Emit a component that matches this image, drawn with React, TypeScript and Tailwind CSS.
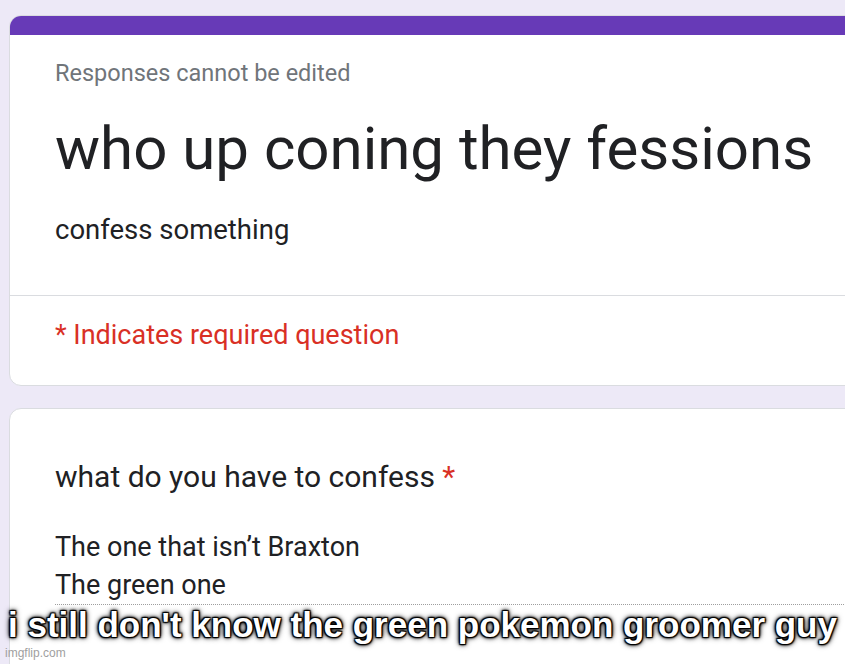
export default function App() {
  return (
    <div className="relative h-[664px] w-[845px] overflow-hidden bg-[#ede9f7] font-['Roboto',sans-serif]">
      <div className="ml-[9px] w-[900px] pt-[15px]">
        {/* header card */}
        <div className="overflow-hidden rounded-[12px] border border-[#dadce0] bg-white">
          <div className="h-[19px] bg-[#673ab7]" />
          <div className="px-[45px] pb-[47px] pt-[23px]">
            <div className="text-[23.5px] leading-[30px] text-[#70757a]">Responses cannot be edited</div>
            <div className="mt-[25px] text-[60px] leading-[72px] text-[#202124]">who up coning they fessions</div>
            <div className="mt-[27px] text-[27.5px] leading-[36px] text-[#202124]">confess something</div>
          </div>
          <div className="border-t border-[#dadce0] px-[45px] pb-[32px] pt-[21px]">
            <div className="text-[27px] leading-[36px] text-[#d93025]">* Indicates required question</div>
          </div>
        </div>

        {/* question card */}
        <div className="mt-[22px] h-[320px] rounded-[12px] border border-[#dadce0] bg-white pl-[45px] pt-[48px]">
          <div className="text-[30px] leading-[40px] text-[#202124]">
            what do you have to confess <span className="text-[#d93025]">*</span>
          </div>
          <div className="mt-[31px] text-[27px] leading-[38px] text-[#202124]">
            <div>The one that isn&rsquo;t Braxton</div>
            <div>The green one</div>
          </div>
          <div className="border-t border-dotted border-[#9e9e9e]" />
        </div>
      </div>

      {/* meme caption */}
      <div className="absolute left-0 right-0 top-[603px] text-center font-['Liberation_Sans',Arial,sans-serif] text-[35px] font-bold leading-[44px] text-white [text-shadow:1px_1px_1px_#000,-1px_-1px_1px_#000,1px_-1px_1px_#000,-1px_1px_1px_#000,0_0_3px_#000,0_0_4px_#000,0_0_6px_#000]">
        i still don&apos;t know the green pokemon groomer guy
      </div>
      <div className="absolute bottom-[2px] left-[5px] font-['Liberation_Sans',Arial,sans-serif] text-[12px] text-[#a0a0a0]">
        imgflip.com
      </div>
    </div>
  );
}
